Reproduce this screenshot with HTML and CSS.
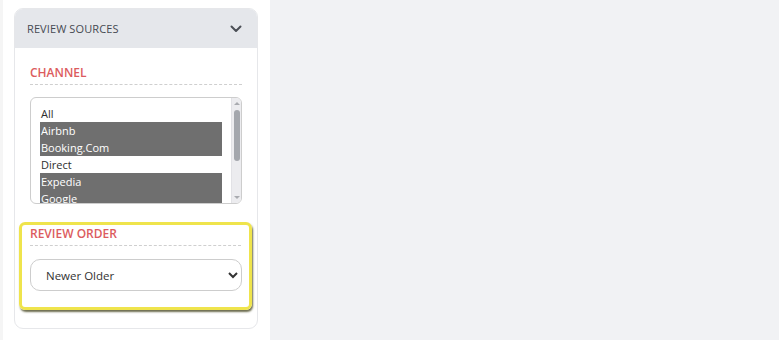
FILE: index.html
```html
<!DOCTYPE html>
<html lang="en">

<head>
  <meta charset="UTF-8">
  <meta name="viewport" content="width=device-width, initial-scale=1.0">
  <title>Review filters</title>
  <link rel="stylesheet" href="styles.css">
</head>

<body>

  <div class="layout">
    <aside class="sidebar">
      <div class="card">
        <div class="card-header">
          <span>REVIEW SOURCES</span>
          <svg width="12" height="8" viewBox="0 0 12 8">
            <path d="M1.5 1.5 L6 6 L10.5 1.5" fill="none" stroke="#4b4f56" stroke-width="2" stroke-linecap="round" stroke-linejoin="round" />
          </svg>
        </div>

        <div class="card-body">
          <div class="section-title">CHANNEL</div>

          <!-- multi select list, scrollbar drawn by hand -->
          <div class="listbox" role="listbox" aria-multiselectable="true">
            <div class="options">
              <div class="option" role="option">All</div>
              <div class="option selected" role="option">Airbnb</div>
              <div class="option selected" role="option">Booking.Com</div>
              <div class="option" role="option">Direct</div>
              <div class="option selected" role="option">Expedia</div>
              <div class="option selected" role="option">Google</div>
            </div>
            <div class="scrollbar">
              <span class="arrow up"></span>
              <span class="thumb"></span>
              <span class="arrow down"></span>
            </div>
          </div>

          <div class="highlight">
            <div class="section-title">REVIEW ORDER</div>
            <select class="dropdown">
              <option>Newer Older</option>
              <option>Older Newer</option>
            </select>
          </div>
        </div>
      </div>
    </aside>
    <main class="content"></main>
  </div>

</body>

</html>
```

FILE: styles.css
```css
body {
  margin: 0;
  background-color: #f1f2f4;
  font-family: "Open Sans", "DejaVu Sans", sans-serif;
  color: #333;
}

.layout {
  display: flex;
  height: 100vh;
}

.sidebar {
  width: 270px;
  background-color: #fff;
  border-left: 3px solid #f5f5f5;
  padding: 8px 0 0 11px;
  box-sizing: border-box;
}

.content {
  flex: 1;
}

.card {
  width: 244px;
  border: 1px solid #e6e7ea;
  border-radius: 9px;
  overflow: hidden;
  box-sizing: border-box;
}

.card-header {
  display: flex;
  justify-content: space-between;
  align-items: center;
  height: 39px;
  padding: 0 15px 0 12px;
  background-color: #e5e7eb;
  font-size: 11px;
  font-weight: 500;
  color: #454a52;
  letter-spacing: 0.1px;
}

.card-body {
  padding: 16px 15px 18px 15px;
}

.section-title {
  font-size: 12px;
  line-height: 18px;
  font-weight: 600;
  color: #dc5c5e;
  padding-bottom: 2px;
  border-bottom: 1px dashed #cfcfcf;
}

.listbox {
  display: flex;
  width: 212px;
  height: 107px;
  margin-top: 12px;
  border: 1px solid #cdcdcd;
  border-radius: 6px;
  box-sizing: border-box;
  overflow: hidden;
  font-size: 11px;
  color: #2e2e2e;
}

.options {
  flex: 1;
  overflow: hidden;
  padding: 7px 9px 0 9px;
}

.option {
  height: 17px;
  line-height: 17px;
  padding-left: 1px;
  white-space: nowrap;
}

.option.selected {
  background-color: #6f6f6f;
  color: #fff;
}

.scrollbar {
  display: flex;
  flex-direction: column;
  align-items: center;
  width: 10px;
  background-color: #ececef;
  border-left: 1px solid #e2e2e6;
  box-sizing: border-box;
}

.arrow {
  width: 0;
  height: 0;
  border-left: 3px solid transparent;
  border-right: 3px solid transparent;
}

.arrow.up {
  margin-top: 4px;
  border-bottom: 3px solid #a9abb0;
}

.arrow.down {
  margin-top: auto;
  margin-bottom: 4px;
  border-top: 3px solid #a9abb0;
}

.thumb {
  width: 6px;
  height: 51px;
  margin-top: 5px;
  border-radius: 3px;
  background-color: #a4a7ad;
}

.highlight {
  margin: 18px -10px 0 -11px;
  padding: 0 8px 16px 8px;
  border: 3px solid #efe44c;
  border-radius: 6px;
  box-shadow: 1px 2px 2px rgba(60, 60, 20, 0.75);
}

.dropdown {
  display: block;
  width: 212px;
  height: 32px;
  margin-top: 13px;
  padding: 0 10px 0 11px;
  border: 1px solid #cdcdcd;
  border-radius: 10px;
  background-color: #fff;
  font-family: inherit;
  font-size: 11.5px;
  color: #333;
  outline: none;
}
```
